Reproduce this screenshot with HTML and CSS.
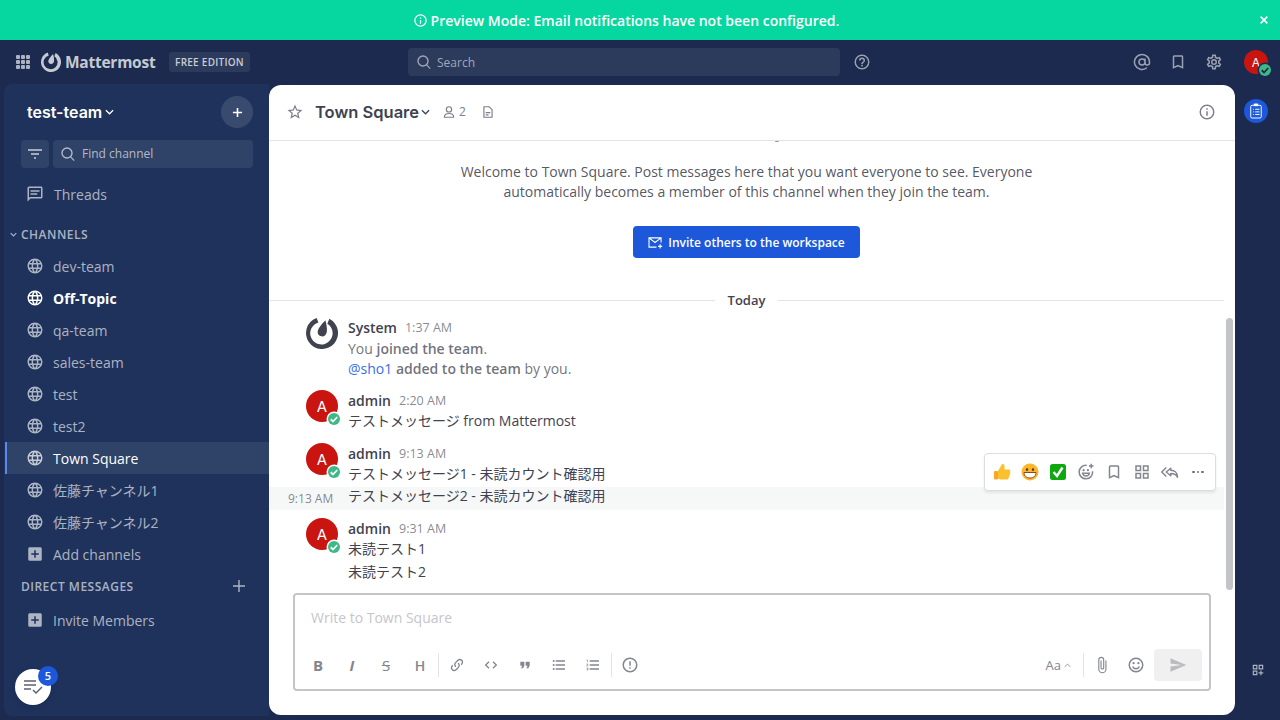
FILE: index.html
```html
<!DOCTYPE html>
<html lang="en">
<head>
  <meta charset="UTF-8">
  <title>Town Square - test-team Mattermost</title>
  <link rel="stylesheet" href="styles.css">
</head>
<body>

  <svg class="sprite" xmlns="http://www.w3.org/2000/svg">
    <symbol id="i-info" viewBox="0 0 24 24"><path d="M11,9H13V7H11M12,20C7.59,20 4,16.41 4,12C4,7.59 7.59,4 12,4C16.41,4 20,7.59 20,12C20,16.41 16.41,20 12,20M12,2A10,10 0 0,0 2,12A10,10 0 0,0 12,22A10,10 0 0,0 22,12A10,10 0 0,0 12,2M11,17H13V11H11V17Z"/></symbol>
    <symbol id="i-search" viewBox="0 0 24 24"><path d="M10.5,2A8.5,8.5 0 0,1 19,10.5C19,12.6 18.2,14.6 16.9,16.1L22,21.2L20.7,22.5L15.6,17.4C14.1,18.3 12.4,19 10.5,19A8.5,8.5 0 0,1 2,10.5A8.5,8.5 0 0,1 10.5,2M10.5,4A6.5,6.5 0 0,0 4,10.5A6.5,6.5 0 0,0 10.5,17A6.5,6.5 0 0,0 17,10.5A6.5,6.5 0 0,0 10.5,4Z"/></symbol>
    <symbol id="i-help" viewBox="0 0 24 24"><path d="M11,18H13V16H11V18M12,2A10,10 0 0,0 2,12A10,10 0 0,0 12,22A10,10 0 0,0 22,12A10,10 0 0,0 12,2M12,20C7.59,20 4,16.41 4,12C4,7.59 7.59,4 12,4C16.41,4 20,7.59 20,12C20,16.41 16.41,20 12,20M12,6A4,4 0 0,0 8,10H10A2,2 0 0,1 12,8A2,2 0 0,1 14,10C14,12 11,11.75 11,15H13C13,12.75 16,12.5 16,10A4,4 0 0,0 12,6Z"/></symbol>
    <symbol id="i-bookmark" viewBox="0 0 24 24"><path d="M17,18L12,15.82L7,18V5H17M17,3H7A2,2 0 0,0 5,5V21L12,18L19,21V5C19,3.89 18.1,3 17,3Z"/></symbol>
    <symbol id="i-cog" viewBox="0 0 24 24"><path d="M12,8A4,4 0 0,1 16,12A4,4 0 0,1 12,16A4,4 0 0,1 8,12A4,4 0 0,1 12,8M12,10A2,2 0 0,0 10,12A2,2 0 0,0 12,14A2,2 0 0,0 14,12A2,2 0 0,0 12,10M10,22C9.75,22 9.54,21.82 9.5,21.58L9.13,18.93C8.5,18.68 7.96,18.34 7.44,17.94L4.95,18.95C4.73,19.03 4.46,18.95 4.34,18.73L2.34,15.27C2.21,15.05 2.27,14.78 2.46,14.63L4.57,12.97L4.5,12L4.57,11L2.46,9.37C2.27,9.22 2.21,8.95 2.34,8.73L4.34,5.27C4.46,5.05 4.73,4.96 4.95,5.05L7.44,6.05C7.96,5.66 8.5,5.32 9.13,5.07L9.5,2.42C9.54,2.18 9.75,2 10,2H14C14.25,2 14.46,2.18 14.5,2.42L14.87,5.07C15.5,5.32 16.04,5.66 16.56,6.05L19.05,5.05C19.27,4.96 19.54,5.05 19.66,5.27L21.66,8.73C21.79,8.95 21.73,9.22 21.54,9.37L19.43,11L19.5,12L19.43,13L21.54,14.63C21.73,14.78 21.79,15.05 21.66,15.27L19.66,18.73C19.54,18.95 19.27,19.04 19.05,18.95L16.56,17.95C16.04,18.34 15.5,18.68 14.87,18.93L14.5,21.58C14.46,21.82 14.25,22 14,22H10M11.25,4L10.88,6.61C9.68,6.86 8.62,7.5 7.85,8.39L5.44,7.35L4.69,8.65L6.8,10.2C6.4,11.37 6.4,12.64 6.8,13.8L4.68,15.36L5.43,16.66L7.86,15.62C8.63,16.5 9.68,17.14 10.87,17.38L11.24,20H12.76L13.13,17.39C14.32,17.14 15.37,16.5 16.14,15.62L18.57,16.66L19.32,15.36L17.2,13.81C17.6,12.64 17.6,11.37 17.2,10.2L19.31,8.65L18.56,7.35L16.15,8.39C15.38,7.5 14.32,6.86 13.12,6.62L12.75,4H11.25Z"/></symbol>
    <symbol id="i-at" viewBox="0 0 24 24"><path fill="none" stroke="currentColor" stroke-width="2" stroke-linecap="round" d="M16,8V13A3,3 0 0,0 22,13V12A10,10 0 1,0 18,20M16,12A4,4 0 1,1 8,12A4,4 0 1,1 16,12Z"/></symbol>
    <symbol id="i-thread" viewBox="0 0 24 24"><path d="M20,2H4A2,2 0 0,0 2,4V22L6,18H20A2,2 0 0,0 22,16V4C22,2.89 21.1,2 20,2M20,16H5.17L4,17.17V4H20V16M6,7H18V9H6V7M6,11H15V13H6V11Z"/></symbol>
    <symbol id="i-globe" viewBox="0 0 24 24"><path d="M16.36,14C16.44,13.34 16.5,12.68 16.5,12C16.5,11.32 16.44,10.66 16.36,10H19.74C19.9,10.64 20,11.31 20,12C20,12.69 19.9,13.36 19.74,14M14.59,19.56C15.19,18.45 15.65,17.25 15.97,16H18.92C17.96,17.65 16.43,18.93 14.59,19.56M14.34,14H9.66C9.56,13.34 9.5,12.68 9.5,12C9.5,11.32 9.56,10.65 9.66,10H14.34C14.43,10.65 14.5,11.32 14.5,12C14.5,12.68 14.43,13.34 14.34,14M12,19.96C11.17,18.76 10.5,17.43 10.09,16H13.91C13.5,17.43 12.83,18.76 12,19.96M8,8H5.08C6.03,6.34 7.57,5.06 9.4,4.44C8.8,5.55 8.35,6.75 8,8M5.08,16H8C8.35,17.25 8.8,18.45 9.4,19.56C7.57,18.93 6.03,17.65 5.08,16M4.26,14C4.1,13.36 4,12.69 4,12C4,11.31 4.1,10.64 4.26,10H7.64C7.56,10.66 7.5,11.32 7.5,12C7.5,12.68 7.56,13.34 7.64,14M12,4.03C12.83,5.23 13.5,6.57 13.91,8H10.09C10.5,6.57 11.17,5.23 12,4.03M18.92,8H15.97C15.65,6.75 15.19,5.55 14.59,4.44C16.43,5.07 17.96,6.34 18.92,8M12,2C6.47,2 2,6.5 2,12A10,10 0 0,0 12,22A10,10 0 0,0 22,12A10,10 0 0,0 12,2Z"/></symbol>
    <symbol id="i-plusbox" viewBox="0 0 24 24"><path d="M17,13H13V17H11V13H7V11H11V7H13V11H17M19,3H5C3.89,3 3,3.89 3,5V19A2,2 0 0,0 5,21H19A2,2 0 0,0 21,19V5C21,3.89 20.1,3 19,3Z"/></symbol>
    <symbol id="i-star" viewBox="0 0 24 24"><path d="M12,15.39L8.24,17.66L9.23,13.38L5.91,10.5L10.29,10.13L12,6.09L13.71,10.13L18.09,10.5L14.77,13.38L15.76,17.66M22,9.24L14.81,8.63L12,2L9.19,8.63L2,9.24L7.45,13.97L5.82,21L12,17.27L18.18,21L16.54,13.97L22,9.24Z"/></symbol>
    <symbol id="i-user" viewBox="0 0 24 24"><path fill="none" stroke="currentColor" stroke-width="2" d="M12,3A4.5,4.5 0 1,1 12,12A4.5,4.5 0 1,1 12,3ZM4,21C4,16 8,14.5 12,14.5C16,14.5 20,16 20,21Z"/></symbol>
    <symbol id="i-doc" viewBox="0 0 24 24"><path fill="none" stroke="currentColor" stroke-width="2" d="M5,3H14L19,8V21H5ZM8,13H16M8,17H13"/></symbol>
    <symbol id="i-link" viewBox="0 0 24 24"><path d="M10.59,13.41C11,13.8 11,14.44 10.59,14.83C10.2,15.22 9.56,15.22 9.17,14.83C7.22,12.88 7.22,9.71 9.17,7.76V7.76L12.71,4.22C14.66,2.27 17.83,2.27 19.78,4.22C21.73,6.17 21.73,9.34 19.78,11.29L18.29,12.78C18.3,11.96 18.17,11.14 17.89,10.36L18.36,9.88C19.54,8.71 19.54,6.81 18.36,5.64C17.19,4.46 15.29,4.46 14.12,5.64L10.59,9.17C9.41,10.34 9.41,12.24 10.59,13.41M13.41,9.17C13.8,8.78 14.44,8.78 14.83,9.17C16.78,11.12 16.78,14.29 14.83,16.24V16.24L11.29,19.78C9.34,21.73 6.17,21.73 4.22,19.78C2.27,17.83 2.27,14.66 4.22,12.71L5.71,11.22C5.7,12.04 5.83,12.86 6.11,13.65L5.64,14.12C4.46,15.29 4.46,17.19 5.64,18.36C6.81,19.54 8.71,19.54 9.88,18.36L13.41,14.83C14.59,13.66 14.59,11.76 13.41,10.59C13,10.2 13,9.56 13.41,9.17Z"/></symbol>
    <symbol id="i-code" viewBox="0 0 24 24"><path fill="none" stroke="currentColor" stroke-width="2" d="M9,7L4,12L9,17M15,7L20,12L15,17"/></symbol>
    <symbol id="i-quote" viewBox="0 0 24 24"><path d="M14,17H17L19,13V7H13V13H16M6,17H9L11,13V7H5V13H8L6,17Z"/></symbol>
    <symbol id="i-ul" viewBox="0 0 24 24"><path d="M7,5H21V7H7V5M7,13V11H21V13H7M4,4.5A1.5,1.5 0 0,1 5.5,6A1.5,1.5 0 0,1 4,7.5A1.5,1.5 0 0,1 2.5,6A1.5,1.5 0 0,1 4,4.5M4,10.5A1.5,1.5 0 0,1 5.5,12A1.5,1.5 0 0,1 4,13.5A1.5,1.5 0 0,1 2.5,12A1.5,1.5 0 0,1 4,10.5M7,19V17H21V19H7M4,16.5A1.5,1.5 0 0,1 5.5,18A1.5,1.5 0 0,1 4,19.5A1.5,1.5 0 0,1 2.5,18A1.5,1.5 0 0,1 4,16.5Z"/></symbol>
    <symbol id="i-ol" viewBox="0 0 24 24"><path d="M7,13V11H21V13H7M7,19V17H21V19H7M7,7V5H21V7H7M3,8V5H2V4H4V8H3M2,17V16H5V20H2V19H4V18.5H3V17.5H4V17H2M4.25,10A0.75,0.75 0 0,1 5,10.75C5,10.95 4.92,11.14 4.79,11.27L3.12,13H5V14H2V13.08L4,11H2V10H4.25Z"/></symbol>
    <symbol id="i-alert" viewBox="0 0 24 24"><path d="M11,15H13V17H11V15M11,7H13V13H11V7M12,2C6.47,2 2,6.5 2,12A10,10 0 0,0 12,22A10,10 0 0,0 22,12A10,10 0 0,0 12,2M12,20A8,8 0 0,1 4,12A8,8 0 0,1 12,4A8,8 0 0,1 20,12A8,8 0 0,1 12,20Z"/></symbol>
    <symbol id="i-clip" viewBox="0 0 24 24"><path d="M16.5,6V17.5A4,4 0 0,1 12.5,21.5A4,4 0 0,1 8.5,17.5V5A2.5,2.5 0 0,1 11,2.5A2.5,2.5 0 0,1 13.5,5V15.5A1,1 0 0,1 12.5,16.5A1,1 0 0,1 11.5,15.5V6H10V15.5A2.5,2.5 0 0,0 12.5,18A2.5,2.5 0 0,0 15,15.5V5A4,4 0 0,0 11,1A4,4 0 0,0 7,5V17.5A5.5,5.5 0 0,0 12.5,23A5.5,5.5 0 0,0 18,17.5V6H16.5Z"/></symbol>
    <symbol id="i-smile" viewBox="0 0 24 24"><path fill="none" stroke="currentColor" stroke-width="2" d="M12,3A9,9 0 1,1 12,21A9,9 0 1,1 12,3ZM7.5,14C8.5,16.2 10,17 12,17C14,17 15.5,16.2 16.5,14"/><circle cx="8.8" cy="9.5" r="1.5"/><circle cx="15.2" cy="9.5" r="1.5"/></symbol>
    <symbol id="i-send" viewBox="0 0 24 24"><path d="M2,21L23,12L2,3V10L17,12L2,14V21Z"/></symbol>
    <symbol id="i-check" viewBox="0 0 24 24"><path fill="none" stroke="currentColor" stroke-width="3.6" d="M5.5,12.5L10,17L18.5,8"/></symbol>
    <symbol id="i-reply" viewBox="0 0 24 24"><path fill="none" stroke="currentColor" stroke-width="2" stroke-linejoin="round" d="M7,6L1,12L7,18M13,7L7,12L13,17V14C17,14 20,15 22,19C22,13 18,9.5 13,9.5Z"/></symbol>
    <symbol id="i-addreact" viewBox="0 0 24 24"><path fill="none" stroke="currentColor" stroke-width="2" d="M13,3.2A9,9 0 1,0 20.8,11M7.5,13.5H16.5C16,16 14.2,17.2 12,17.2C9.8,17.2 8,16 7.5,13.5ZM19,1V7M16,4H22"/><circle cx="8.8" cy="9.5" r="1.5"/><circle cx="14.5" cy="9.5" r="1.5"/></symbol>
    <symbol id="i-apps" viewBox="0 0 24 24"><path fill="none" stroke="currentColor" stroke-width="2" d="M4,4H10V10H4ZM14,4H20V10H14ZM4,14H10V20H4ZM14,14H20V20H14Z"/></symbol>
    <symbol id="i-appsplus" viewBox="0 0 24 24"><path fill="none" stroke="currentColor" stroke-width="2" d="M4,4H10V10H4ZM14,4H20V10H14ZM4,14H10V20H4ZM17,13V21M13,17H21"/></symbol>
    <symbol id="i-logo" viewBox="0 0 24 24"><path d="M8,0.7A12,12 0 1,0 17.5,1.33L16,5.07A8.4,8.4 0 1,1 9.3,4.1Z"/><path d="M14.5,2.5C15.4,5.5 16,9 15.6,11.2C15.2,13.4 13.5,14.9 11.6,14.5C9.6,14.1 8.4,12.4 8.8,10.6C9.2,8.4 12,5.2 14.5,2.5Z"/></symbol>
  </svg>

  <div class="banner">
    <svg class="ic ic-16"><use href="#i-info"/></svg>
    <span>Preview Mode: Email notifications have not been configured.</span>
    <svg class="banner-close" viewBox="0 0 12 12"><path d="M2,2L10,10M10,2L2,10"/></svg>
  </div>

  <header class="topbar">
    <div class="topbar-left">
      <div class="apps-grid"><i></i><i></i><i></i><i></i><i></i><i></i><i></i><i></i><i></i></div>
      <svg class="ic topbar-logo"><use href="#i-logo"/></svg>
      <span class="wordmark">Mattermost</span>
      <span class="edition">FREE EDITION</span>
    </div>
    <div class="topbar-search">
      <svg class="ic ic-16"><use href="#i-search"/></svg>
      <span>Search</span>
    </div>
    <svg class="ic ic-18 topbar-help"><use href="#i-help"/></svg>
    <div class="topbar-right">
      <svg class="ic ic-18"><use href="#i-at"/></svg>
      <svg class="ic ic-18"><use href="#i-bookmark"/></svg>
      <svg class="ic ic-18"><use href="#i-cog"/></svg>
      <div class="avatar avatar-sm">A
        <span class="status status-dark"><svg class="ic"><use href="#i-check"/></svg></span>
      </div>
    </div>
  </header>

  <div class="workspace">
    <aside class="sidebar">
      <div class="team-head">
        <span class="team-name">test-team</span>
        <svg class="chev" viewBox="0 0 10 6"><path d="M1,1L5,5L9,1"/></svg>
        <button class="team-add"><svg viewBox="0 0 12 12"><path d="M6,1V11M1,6H11"/></svg></button>
      </div>
      <div class="side-tools">
        <div class="filter-btn"><svg viewBox="0 0 14 10"><path d="M0,1H14M3,5H11M6,9H8"/></svg></div>
        <div class="find">
          <svg class="ic ic-16"><use href="#i-search"/></svg>
          <span>Find channel</span>
        </div>
      </div>
      <div class="side-row threads"><svg class="ic ic-18"><use href="#i-thread"/></svg><span>Threads</span></div>

      <div class="side-cat">
        <svg class="cat-chev" viewBox="0 0 10 6"><path d="M1,1L5,5L9,1"/></svg>
        <span>CHANNELS</span>
      </div>
      <div class="side-row"><svg class="ic ic-18"><use href="#i-globe"/></svg><span>dev-team</span></div>
      <div class="side-row unread"><svg class="ic ic-18"><use href="#i-globe"/></svg><span>Off-Topic</span></div>
      <div class="side-row"><svg class="ic ic-18"><use href="#i-globe"/></svg><span>qa-team</span></div>
      <div class="side-row"><svg class="ic ic-18"><use href="#i-globe"/></svg><span>sales-team</span></div>
      <div class="side-row"><svg class="ic ic-18"><use href="#i-globe"/></svg><span>test</span></div>
      <div class="side-row"><svg class="ic ic-18"><use href="#i-globe"/></svg><span>test2</span></div>
      <div class="side-row active"><svg class="ic ic-18"><use href="#i-globe"/></svg><span>Town Square</span></div>
      <div class="side-row"><svg class="ic ic-18"><use href="#i-globe"/></svg><span>佐藤チャンネル1</span></div>
      <div class="side-row"><svg class="ic ic-18"><use href="#i-globe"/></svg><span>佐藤チャンネル2</span></div>
      <div class="side-row"><svg class="ic ic-18"><use href="#i-plusbox"/></svg><span>Add channels</span></div>

      <div class="side-cat dm-cat">
        <span>DIRECT MESSAGES</span>
        <svg class="dm-add" viewBox="0 0 12 12"><path d="M6,0V12M0,6H12"/></svg>
      </div>
      <div class="side-row invite"><svg class="ic ic-18"><use href="#i-plusbox"/></svg><span>Invite Members</span></div>

      <div class="todo-btn">
        <svg viewBox="0 0 20 16"><path d="M1,2H13M1,6H13M1,10H8M10,11L13,14L19,8"/></svg>
        <span class="todo-badge">5</span>
      </div>
    </aside>

    <main class="center">
      <div class="channel-head">
        <svg class="ic ic-18 head-icon"><use href="#i-star"/></svg>
        <span class="channel-title">Town Square</span>
        <svg class="chev chev-dark" viewBox="0 0 10 6"><path d="M1,1L5,5L9,1"/></svg>
        <svg class="ic ic-14 head-icon head-members"><use href="#i-user"/></svg>
        <span class="member-count">2</span>
        <svg class="ic ic-14 head-icon head-doc"><use href="#i-doc"/></svg>
        <svg class="ic ic-18 head-icon head-info"><use href="#i-info"/></svg>
      </div>

      <div class="scroller">
        <div class="intro">
          <h1 class="intro-title">Town Square</h1>
          <p>Welcome to Town Square. Post messages here that you want everyone to see. Everyone<br>automatically becomes a member of this channel when they join the team.</p>
          <button class="invite-btn">
            <svg viewBox="0 0 16 14"><path d="M14,7V2H1V12H9M1,2L7.5,7L14,2M13,9V13.5M10.8,11.2H15.2"/></svg>
            Invite others to the workspace
          </button>
        </div>

        <div class="day-line"><span>Today</span></div>

        <div class="post">
          <div class="avatar avatar-system"><svg class="ic"><use href="#i-logo"/></svg></div>
          <div class="post-body">
            <div class="post-head"><b>System</b><time>1:37 AM</time></div>
            <div class="sys-line">You <b>joined the team</b>.</div>
            <div class="sys-line"><a>@sho1</a> <b>added to the team</b> by you.</div>
          </div>
        </div>

        <div class="post">
          <div class="avatar">A<span class="status"><svg class="ic"><use href="#i-check"/></svg></span></div>
          <div class="post-body">
            <div class="post-head"><b>admin</b><time>2:20 AM</time></div>
            <div class="msg-line">テストメッセージ from Mattermost</div>
          </div>
        </div>

        <div class="post post-short">
          <div class="avatar">A<span class="status"><svg class="ic"><use href="#i-check"/></svg></span></div>
          <div class="post-body">
            <div class="post-head"><b>admin</b><time>9:13 AM</time></div>
            <div class="msg-line">テストメッセージ1 - 未読カウント確認用</div>
          </div>
        </div>
        <div class="post-follow">
          <time>9:13 AM</time>
          <div class="msg-line">テストメッセージ2 - 未読カウント確認用</div>
        </div>

        <div class="post post-last">
          <div class="avatar">A<span class="status"><svg class="ic"><use href="#i-check"/></svg></span></div>
          <div class="post-body">
            <div class="post-head"><b>admin</b><time>9:31 AM</time></div>
            <div class="msg-line">未読テスト1</div>
            <div class="msg-line">未読テスト2</div>
          </div>
        </div>

        <div class="post-menu">
          <svg class="emoji" viewBox="0 0 20 20">
            <path fill="#fbc02d" d="M6,9L9.5,3C10,1.5 12.5,1.5 12.5,4V7.5H17C18.5,7.5 18.8,9.5 17.8,10C18.8,10.8 18.5,12.3 17.5,12.6C18.2,13.5 17.7,14.8 16.7,15C17,16.2 16.4,17.5 15,17.5H9.5C8,17.5 7,17 6,16.5Z"/>
            <rect x="2" y="9" width="4" height="8.5" rx="1" fill="#f9a825"/>
          </svg>
          <svg class="emoji" viewBox="0 0 20 20">
            <circle cx="10" cy="10" r="8.5" fill="#fbb62d"/>
            <ellipse cx="7" cy="7.5" rx="1.2" ry="1.6" fill="#5d4037"/>
            <ellipse cx="13" cy="7.5" rx="1.2" ry="1.6" fill="#5d4037"/>
            <path fill="#fff" stroke="#8a4b1f" d="M4,10.5H16C16,14 13.5,16 10,16C6.5,16 4,14 4,10.5Z"/>
          </svg>
          <svg class="emoji" viewBox="0 0 20 20">
            <rect x="2" y="2" width="16" height="16" rx="2.5" fill="#0fa80f"/>
            <path fill="none" stroke="#fff" stroke-width="2.4" d="M5.5,10L9,14L14.5,5.5"/>
          </svg>
          <svg class="ic ic-18"><use href="#i-addreact"/></svg>
          <svg class="ic ic-18"><use href="#i-bookmark"/></svg>
          <svg class="ic ic-18"><use href="#i-apps"/></svg>
          <svg class="ic ic-18"><use href="#i-reply"/></svg>
          <span class="dots"><i></i><i></i><i></i></span>
        </div>

        <div class="scrollbar"></div>
      </div>

      <div class="composer">
        <div class="composer-input">Write to Town Square</div>
        <div class="composer-tools">
          <span class="tool tool-b">B</span>
          <span class="tool tool-i">I</span>
          <span class="tool tool-s">S</span>
          <span class="tool tool-h">H</span>
          <span class="tool-sep"></span>
          <span class="tool"><svg class="ic ic-16"><use href="#i-link"/></svg></span>
          <span class="tool"><svg class="ic ic-16"><use href="#i-code"/></svg></span>
          <span class="tool"><svg class="ic ic-16"><use href="#i-quote"/></svg></span>
          <span class="tool"><svg class="ic ic-16"><use href="#i-ul"/></svg></span>
          <span class="tool"><svg class="ic ic-16"><use href="#i-ol"/></svg></span>
          <span class="tool-sep"></span>
          <span class="tool"><svg class="ic ic-18"><use href="#i-alert"/></svg></span>
          <span class="tool-aa">Aa <svg viewBox="0 0 10 6"><path d="M1,5L5,1L9,5"/></svg></span>
          <span class="tool-sep"></span>
          <span class="tool"><svg class="ic ic-18"><use href="#i-clip"/></svg></span>
          <span class="tool"><svg class="ic ic-18"><use href="#i-smile"/></svg></span>
          <span class="send-btn"><svg class="ic ic-18"><use href="#i-send"/></svg></span>
        </div>
      </div>
    </main>

    <aside class="rail">
      <div class="rail-app">
        <svg viewBox="0 0 16 18"><rect x="2" y="2.5" width="12" height="14.5" rx="1.5"/><rect class="clip" x="5.5" y="0.5" width="5" height="3"/><path d="M4.5,7H5.5M7,7H12M4.5,10H5.5M7,10H12M4.5,13H5.5M7,13H12"/></svg>
      </div>
      <svg class="ic ic-14 rail-add"><use href="#i-appsplus"/></svg>
    </aside>
  </div>

</body>
</html>
```

FILE: styles.css
```css
* {
  box-sizing: border-box;
}
html, body {
  height: 100%;
}
body {
  margin: 0;
  overflow: hidden;
  display: flex;
  flex-direction: column;
  background: #1b2a4e;
  color: #3f4350;
  font-family: "Open Sans", "Noto Sans CJK JP", sans-serif;
  font-size: 14px;
}
.sprite {
  display: none;
}
.ic {
  fill: currentColor;
  flex: none;
}
.ic-14 { width: 14px; height: 14px; }
.ic-16 { width: 16px; height: 16px; }
.ic-18 { width: 18px; height: 18px; }

/* banner */
.banner {
  height: 40px;
  flex: none;
  display: flex;
  align-items: center;
  justify-content: center;
  gap: 3px;
  position: relative;
  padding-right: 28px;
  background: #06d6a0;
  color: #fff;
  font-weight: 600;
}
.banner .ic {
  width: 15px;
  height: 15px;
}
.banner-close {
  position: absolute;
  right: 11px;
  top: 15px;
  width: 10px;
  height: 10px;
  fill: none;
  stroke: #fff;
  stroke-width: 2;
}

/* top bar */
.topbar {
  height: 45px;
  flex: none;
  display: flex;
  align-items: center;
  padding-bottom: 1px;
  color: rgba(255,255,255,0.56);
}
.topbar-left {
  width: 408px;
  display: flex;
  align-items: center;
  padding-left: 16px;
}
.apps-grid {
  display: grid;
  grid-template-columns: repeat(3, 4px);
  gap: 1px;
  margin-right: 11px;
}
.apps-grid i {
  width: 4px;
  height: 4px;
  border-radius: 1px;
  background: rgba(255,255,255,0.64);
}
.topbar-logo {
  width: 20px;
  height: 20px;
  margin-right: 4px;
  color: rgba(255,255,255,0.75);
}
.wordmark {
  width: 104px;
  font-size: 15.5px;
  font-weight: 700;
  letter-spacing: -0.25px;
  color: rgba(255,255,255,0.75);
}
.edition {
  width: 81px;
  height: 20px;
  display: flex;
  align-items: center;
  justify-content: center;
  border-radius: 3px;
  background: rgba(255,255,255,0.08);
  font-size: 10px;
  font-weight: 600;
  letter-spacing: 0.25px;
  color: rgba(255,255,255,0.75);
}
.topbar-search {
  width: 432px;
  height: 28px;
  display: flex;
  align-items: center;
  gap: 5px;
  padding-left: 8px;
  border-radius: 4px;
  background: rgba(255,255,255,0.08);
  font-size: 12px;
}
.topbar-help {
  margin-left: 13px;
}
.topbar-right {
  margin-left: auto;
  display: flex;
  align-items: center;
  gap: 18px;
  padding-right: 12px;
}
.topbar-right .avatar {
  margin-left: 3px;
}

/* avatars */
.avatar {
  width: 32px;
  height: 32px;
  flex: none;
  position: relative;
  display: flex;
  align-items: center;
  justify-content: center;
  border-radius: 50%;
  background: #c9140f;
  color: #fff;
  font-family: Inter, "Open Sans", sans-serif;
  font-size: 15px;
}
.avatar-sm {
  width: 24px;
  height: 24px;
  font-size: 12px;
}
.avatar-system {
  background: none;
  color: #3f4350;
}
.avatar-system .ic {
  width: 32px;
  height: 32px;
}
.status {
  position: absolute;
  right: -1.5px;
  bottom: -2.5px;
  width: 12px;
  height: 12px;
  border-radius: 50%;
  background: #3db887;
  box-shadow: 0 0 0 1.5px #fff;
  color: #fff;
  display: flex;
}
.status .ic {
  width: 12px;
  height: 12px;
}
.status-dark {
  right: -3px;
  bottom: -1.5px;
  box-shadow: 0 0 0 1.5px #1b2a4e;
  color: #1b2a4e;
}

/* main area */
.workspace {
  flex: 1;
  min-height: 0;
  display: flex;
  position: relative;
}
.sidebar {
  width: 265px;
  height: 632px;
  margin: -1px 0 0 4px;
  flex: none;
  position: relative;
  border-radius: 8px 0 0 8px;
  background: #1e325c;
  color: rgba(255,255,255,0.64);
}
.team-head {
  height: 56px;
  display: flex;
  align-items: center;
  padding: 0 16px 0 23px;
}
.team-name {
  font-family: Inter, "Open Sans", sans-serif;
  font-size: 16px;
  font-weight: 600;
  color: #fff;
}
.chev {
  width: 9px;
  height: 6px;
  margin-left: 3px;
  fill: none;
  stroke: #fff;
  stroke-width: 1.4;
}
.team-add {
  width: 32px;
  height: 32px;
  margin-left: auto;
  padding: 0;
  display: flex;
  align-items: center;
  justify-content: center;
  border: none;
  border-radius: 50%;
  background: rgba(255,255,255,0.12);
}
.team-add svg {
  width: 11px;
  height: 11px;
  fill: none;
  stroke: #fff;
  stroke-width: 1.7;
}
.side-tools {
  height: 28px;
  display: flex;
  gap: 4px;
  margin: 0 16px 0 17px;
}
.filter-btn {
  width: 28px;
  display: flex;
  align-items: center;
  justify-content: center;
  border-radius: 4px;
  background: rgba(255,255,255,0.08);
}
.filter-btn svg {
  width: 14px;
  height: 10px;
  fill: none;
  stroke: rgba(255,255,255,0.75);
  stroke-width: 1.4;
}
.find {
  flex: 1;
  display: flex;
  align-items: center;
  gap: 6px;
  padding: 0 0 1px 7px;
  border-radius: 4px;
  background: rgba(255,255,255,0.08);
  font-size: 12px;
}
.side-row {
  height: 32px;
  display: flex;
  align-items: center;
  gap: 10px;
  padding-left: 21px;
}
.side-row .ic {
  margin-left: 1px;
  margin-right: -1px;
}
.threads {
  margin: 10px 0 8px;
  gap: 11px;
}
.side-row.unread {
  color: #fff;
  font-weight: 700;
}
.side-row.active {
  margin-left: 1px;
  padding-left: 18px;
  border-left: 2px solid #5d89ea;
  background: rgba(255,255,255,0.08);
  color: #fff;
}
.side-row.active .ic {
  opacity: 0.72;
}
.side-cat {
  height: 32px;
  display: flex;
  align-items: center;
  padding-left: 6px;
  font-size: 12px;
  font-weight: 600;
  letter-spacing: 0.5px;
}
.cat-chev {
  width: 7px;
  height: 5px;
  margin-right: 4px;
  fill: none;
  stroke: currentColor;
  stroke-width: 1.6;
}
.dm-cat {
  padding-left: 17px;
}
.dm-add {
  width: 12px;
  height: 12px;
  margin-left: auto;
  margin-right: 24px;
  fill: none;
  stroke: currentColor;
  stroke-width: 1.4;
}
.invite {
  margin-top: 2px;
}
.todo-btn {
  position: absolute;
  left: 11px;
  bottom: 11px;
  width: 36px;
  height: 36px;
  display: flex;
  align-items: center;
  justify-content: center;
  border-radius: 50%;
  background: #fff;
  box-shadow: 0 2px 6px rgba(0,0,0,0.15);
}
.todo-btn svg {
  width: 20px;
  height: 16px;
  fill: none;
  stroke: #5e6270;
  stroke-width: 1.5;
}
.todo-badge {
  position: absolute;
  top: -3px;
  right: -7px;
  width: 20px;
  height: 20px;
  line-height: 19px;
  text-align: center;
  border-radius: 10px;
  background: #1c58d9;
  color: #fff;
  font-size: 11px;
  font-weight: 600;
}

/* center channel */
.center {
  width: 966px;
  height: 630px;
  flex: none;
  display: flex;
  flex-direction: column;
  position: relative;
  border-radius: 12px;
  background: #fff;
  overflow: hidden;
}
.channel-head {
  height: 56px;
  flex: none;
  display: flex;
  align-items: center;
  padding: 0 19px 2px 17px;
  border-bottom: 1px solid #e3e4e6;
}
.head-icon {
  color: #7c7f8a;
}
.channel-title {
  margin-left: 11px;
  font-family: Inter, "Open Sans", sans-serif;
  font-size: 16.5px;
  font-weight: 600;
}
.chev-dark {
  margin-left: 2px;
  stroke: #3f4350;
}
.head-members {
  margin-left: 12px;
}
.member-count {
  margin-left: 3px;
  font-size: 12px;
  color: #7c7f8a;
}
.head-doc {
  margin-left: 15px;
}
.head-info {
  margin-left: auto;
}

.scroller {
  flex: 1;
  min-height: 0;
  display: flex;
  flex-direction: column;
  justify-content: flex-end;
  position: relative;
  padding-right: 11px;
  overflow: hidden;
}
.scroller > * {
  flex: none;
}
.intro {
  text-align: center;
}
.intro-title {
  margin: 0 0 18px;
  padding-left: 12px;
  font-family: Inter, "Open Sans", sans-serif;
  font-size: 28px;
  line-height: 36px;
  font-weight: 600;
}
.intro p {
  margin: 0;
  line-height: 20px;
  color: rgba(63,67,80,0.9);
}
.invite-btn {
  height: 32px;
  width: 227px;
  margin-top: 24px;
  display: inline-flex;
  align-items: center;
  justify-content: center;
  gap: 5px;
  border: none;
  border-radius: 4px;
  background: #1c58d9;
  color: #fff;
  font-family: inherit;
  font-size: 12px;
  font-weight: 600;
}
.invite-btn svg {
  width: 15px;
  height: 13px;
  fill: none;
  stroke: #fff;
  stroke-width: 1.2;
}
.day-line {
  margin: 32px 0 7px;
  height: 20px;
  display: flex;
  align-items: center;
  gap: 13px;
  font-size: 13px;
  font-weight: 600;
}
.day-line::before, .day-line::after {
  content: "";
  flex: 1;
  height: 1px;
  background: #e3e4e6;
}
.post {
  display: flex;
  gap: 10px;
  padding-left: 37px;
  margin-bottom: 11px;
}
.post-short {
  margin-bottom: 2px;
}
.post-last {
  margin: 0 0 7px;
}
.post-last .msg-line + .msg-line {
  margin-top: 1px;
}
.post-body {
  flex: 1;
}
.post-head {
  height: 20px;
  display: flex;
  align-items: center;
  gap: 8px;
}
.post-head b {
  font-weight: 600;
}
time {
  font-size: 12px;
  color: rgba(63,67,80,0.64);
}
.post-head time {
  font-size: 12.5px;
}
.sys-line {
  height: 20px;
  line-height: 20px;
  color: rgba(63,67,80,0.75);
}
.post-head + .sys-line {
  margin-top: 2px;
}
.sys-line b {
  font-weight: 600;
}
.sys-line a {
  color: #386fe5;
}
.msg-line {
  height: 22px;
  line-height: 22px;
}
.post-follow {
  height: 23px;
  margin: 0 0 8px;
  display: flex;
  align-items: flex-start;
  background: #f6f7f7;
}
.post-follow time {
  width: 79px;
  padding-left: 19px;
  flex: none;
  align-self: center;
}
.post-follow .msg-line {
  height: 18px;
  line-height: 18px;
}
.post-menu {
  position: absolute;
  top: 312px;
  right: 19px;
  width: 232px;
  height: 38px;
  display: grid;
  grid-template-columns: repeat(8, 28px);
  justify-items: center;
  align-items: center;
  padding-left: 3px;
  border: 1px solid #dcdde0;
  border-radius: 4px;
  background: #fff;
  box-shadow: 0 2px 3px rgba(0,0,0,0.08);
  color: #83868f;
}
.emoji {
  width: 20px;
  height: 20px;
}
.dots {
  width: 18px;
  display: flex;
  justify-content: center;
  gap: 2px;
}
.dots i {
  width: 2.5px;
  height: 2.5px;
  border-radius: 50%;
  background: #6f727d;
}
.scrollbar {
  position: absolute;
  top: 177px;
  right: 2px;
  width: 7px;
  height: 272px;
  border-radius: 4px;
  background: #c3c4c8;
}

/* composer */
.composer {
  height: 98px;
  margin: 3px 24px 24px;
  flex: none;
  position: relative;
  padding: 0 7px 0 16px;
  border: 2px solid #c4c5cb;
  border-radius: 4px;
}
.composer-input {
  height: 51px;
  padding-top: 13px;
  line-height: 20px;
  color: #c5c6cb;
}
.composer-tools {
  height: 36px;
  margin-top: 1px;
  display: flex;
  align-items: center;
  color: #83868f;
}
.tool {
  width: 34px;
  display: flex;
  justify-content: center;
  font-weight: 700;
  flex: none;
}
.tool-b { margin-left: -10px; font-size: 15px; }
.tool-i { font-style: italic; font-size: 15px; }
.tool-s { text-decoration: line-through; font-weight: 400; font-size: 15px; }
.tool-h { font-weight: 600; }
.tool-sep {
  width: 1px;
  height: 24px;
  margin: 0 1px;
  background: #e3e4e6;
  flex: none;
}
.tool-aa {
  margin-left: auto;
  margin-right: 11px;
  display: flex;
  align-items: center;
  gap: 3px;
  font-size: 13px;
}
.tool-aa svg {
  width: 7px;
  height: 5px;
  fill: none;
  stroke: currentColor;
  stroke-width: 1.2;
}
.send-btn {
  width: 48px;
  height: 32px;
  margin-left: 1px;
  flex: none;
  display: flex;
  align-items: center;
  justify-content: center;
  border-radius: 4px;
  background: #f0f0f1;
  color: #babbc0;
}

/* right rail */
.rail {
  flex: 1;
  position: relative;
}
.rail-app {
  width: 24px;
  height: 24px;
  position: absolute;
  top: 14px;
  left: 9px;
  display: flex;
  align-items: center;
  justify-content: center;
  border-radius: 50%;
  background: #1c58d9;
}
.rail-app svg {
  width: 14px;
  height: 16px;
  fill: none;
  stroke: #fff;
  stroke-width: 1.1;
}
.rail-app .clip {
  fill: #fff;
  stroke: none;
}
.rail-add {
  position: absolute;
  top: 578px;
  left: 16px;
  color: rgba(255,255,255,0.64);
}
```
